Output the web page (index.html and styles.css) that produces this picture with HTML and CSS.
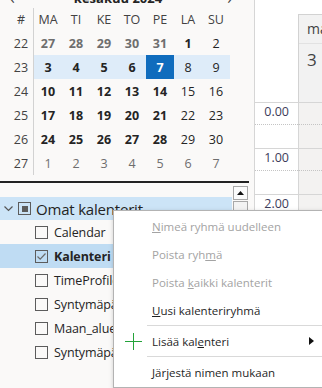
FILE: index.html
```html
<!DOCTYPE html>
<html lang="fi">

<head>
    <meta charset="UTF-8">
    <meta name="viewport" content="width=device-width, initial-scale=1.0">
    <title>Kalenteri</title>
    <link rel="stylesheet" href="styles.css">
</head>

<body>

    <!-- Left pane: month + folder list -->
    <div class="sidebar">
        <div class="month-title">
            <span class="month-nav">&lsaquo;</span>
            <span class="month-name">kesäkuu 2024</span>
            <span class="month-nav">&rsaquo;</span>
        </div>

        <div class="cal">
            <div class="wk">#</div>
            <div class="dow">MA</div><div class="dow">TI</div><div class="dow">KE</div><div class="dow">TO</div><div class="dow">PE</div><div class="dow">LA</div><div class="dow">SU</div>

            <div class="wk">22</div>
            <div class="day other bold">27</div><div class="day other bold">28</div><div class="day other bold">29</div><div class="day other bold">30</div><div class="day other bold">31</div><div class="day bold">1</div><div class="day">2</div>

            <div class="wk">23</div>
            <div class="day bold week-on">3</div><div class="day bold week-on">4</div><div class="day bold week-on">5</div><div class="day bold week-on">6</div><div class="day bold selected">7</div><div class="day week-on">8</div><div class="day week-on">9</div>

            <div class="wk">24</div>
            <div class="day bold">10</div><div class="day bold">11</div><div class="day bold">12</div><div class="day bold">13</div><div class="day bold">14</div><div class="day">15</div><div class="day">16</div>

            <div class="wk">25</div>
            <div class="day bold">17</div><div class="day bold">18</div><div class="day bold">19</div><div class="day bold">20</div><div class="day bold">21</div><div class="day">22</div><div class="day">23</div>

            <div class="wk">26</div>
            <div class="day bold">24</div><div class="day bold">25</div><div class="day bold">26</div><div class="day bold">27</div><div class="day bold">28</div><div class="day">29</div><div class="day">30</div>

            <div class="wk">27</div>
            <div class="day other">1</div><div class="day other">2</div><div class="day other">3</div><div class="day other">4</div><div class="day other">5</div><div class="day other">6</div><div class="day other">7</div>
        </div>

        <div class="pane-split"></div>

        <div class="folders">
            <div class="folder-list">
                <div class="group-row">
                    <svg class="chevron" width="9" height="6" viewBox="0 0 9 6">
                        <path d="M0.5 0.5 L4.5 4.5 L8.5 0.5" fill="none" stroke="#555" stroke-width="1.2" />
                    </svg>
                    <span class="box box-mixed"></span>
                    <span class="group-name">Omat kalenterit</span>
                </div>
                <div class="cal-row"><span class="box"></span>Calendar</div>
                <div class="cal-row checked">
                    <span class="box">
                        <svg width="11" height="11" viewBox="0 0 11 11">
                            <path d="M1.5 5.5 L4.2 8.2 L9.5 2.5" fill="none" stroke="#6a6a6a" stroke-width="1.2" />
                        </svg>
                    </span>Kalenteri
                </div>
                <div class="cal-row"><span class="box"></span>TimeProfile</div>
                <div class="cal-row"><span class="box"></span>Syntymäpäivät</div>
                <div class="cal-row"><span class="box"></span>Maan_alueen_pyhäpäivät</div>
                <div class="cal-row"><span class="box"></span>Syntymäpäivät</div>
            </div>
            <div class="scrollbar">
                <div class="scroll-up">
                    <svg width="7" height="4" viewBox="0 0 7 4"><path d="M0 4 L3.5 0 L7 4 Z" fill="#111" /></svg>
                </div>
                <div class="scroll-thumb"></div>
            </div>
        </div>
    </div>

    <!-- Right pane: day view -->
    <div class="day-view">
        <div class="day-top">
            <div class="gutter"></div>
            <div class="day-top-slot">
                <div class="day-head">
                    <div class="day-abbr">ma</div>
                    <div class="day-date">3</div>
                </div>
            </div>
        </div>
        <div class="hour">
            <div class="time">0.00</div><div class="slot half"></div>
            <div class="gutter"></div><div class="slot"></div>
        </div>
        <div class="hour">
            <div class="time">1.00</div><div class="slot half"></div>
            <div class="gutter"></div><div class="slot"></div>
        </div>
        <div class="hour">
            <div class="time">2.00</div><div class="slot half"></div>
            <div class="gutter"></div><div class="slot"></div>
        </div>
        <div class="hour">
            <div class="time">3.00</div><div class="slot half"></div>
            <div class="gutter"></div><div class="slot"></div>
        </div>
    </div>

    <!-- Context menu -->
    <div class="menu">
        <div class="menu-item disabled"><span class="menu-icon"></span><span><u>N</u>imeä ryhmä uudelleen</span></div>
        <div class="menu-item disabled"><span class="menu-icon"></span><span>Poista ryh<u>m</u>ä</span></div>
        <div class="menu-item disabled"><span class="menu-icon"></span><span>Poista <u>k</u>aikki kalenterit</span></div>
        <div class="menu-item"><span class="menu-icon"></span><span><u>U</u>usi kalenteriryhmä</span></div>
        <div class="menu-sep"></div>
        <div class="menu-item">
            <span class="menu-icon">
                <svg width="19" height="19" viewBox="0 0 19 19">
                    <path d="M9.5 1 V18 M1 9.5 H18" stroke="#24a33a" stroke-width="1" />
                </svg>
            </span>
            <span>Lisää kal<u>e</u>nteri</span>
            <span class="submenu-arrow"></span>
        </div>
        <div class="menu-sep"></div>
        <div class="menu-item"><span class="menu-icon"></span><span><u>J</u>ärjestä nimen mukaan</span></div>
    </div>

</body>

</html>
```

FILE: styles.css
```css
body,
html {
    margin: 0;
    padding: 0;
    height: 388px;
    overflow: hidden;
}

body {
    display: flex;
    position: relative;
    background-color: #ffffff;
    font-family: "Open Sans", "Noto Sans", sans-serif;
    color: #242424;
}

/* Left pane */
.sidebar {
    width: 255px;
    height: 388px;
    flex: none;
    box-sizing: border-box;
    border-right: 1px solid #d6d6d6;
    background-color: #faf9f8;
    overflow: hidden;
}

.month-title {
    display: flex;
    align-items: center;
    height: 18px;
    margin-top: -11px;
    padding: 0 22px 0 10px;
    font-size: 13px;
    line-height: 18px;
}

.month-name {
    flex: 1;
    text-align: center;
    font-weight: 700;
    padding-right: 6px;
}

.month-nav {
    font-size: 16px;
    color: #444;
}

.cal {
    display: grid;
    grid-template-columns: 25px repeat(7, 28px);
    grid-template-rows: 23px repeat(6, 24px);
    margin-top: 1px;
    padding-left: 9px;
    font-size: 12.5px;
}

.cal > div {
    display: flex;
    align-items: center;
    justify-content: center;
}

.wk {
    border-right: 1px solid #d2d2d2;
    color: #424242;
}

.dow {
    color: #424242;
}

.day {
    color: #242424;
}

.day.bold {
    font-weight: 700;
}

.day.other {
    color: #6e6e6e;
}

.day.week-on {
    background-color: #deecf9;
}

.day.selected {
    background-color: #0f6cbd;
    color: #ffffff;
}

.pane-split {
    height: 2px;
    margin: 6px 5px 0 0;
    background-color: #222;
}

.folders {
    display: flex;
    padding-right: 6px;
}

.folder-list {
    flex: 1;
    padding-top: 14px;
    margin-right: 1px;
}

.group-row {
    display: flex;
    align-items: center;
    height: 23px;
    background-color: #cce4f7;
    white-space: nowrap;
}

.chevron {
    margin: 0 5px 0 4px;
}

.box {
    display: inline-flex;
    align-items: center;
    justify-content: center;
    width: 13px;
    height: 13px;
    box-sizing: border-box;
    border: 1px solid #5c5c5c;
    flex: none;
}

.box-mixed::after {
    content: "";
    width: 6px;
    height: 6px;
    background-color: #5c5c5c;
}

.group-name {
    margin-left: 5px;
    font-size: 15px;
    letter-spacing: -0.2px;
    color: #242424;
}

.cal-row {
    display: flex;
    align-items: center;
    height: 24px;
    padding-left: 35px;
    font-size: 12.5px;
    letter-spacing: -0.1px;
    white-space: nowrap;
}

.cal-row .box {
    margin-right: 6px;
}

.cal-row.checked {
    background-color: #bfdcf3;
    font-weight: 700;
}

.scrollbar {
    width: 15px;
    padding-top: 3px;
}

.scroll-up {
    display: flex;
    align-items: center;
    justify-content: center;
    height: 14px;
    box-sizing: border-box;
    border: 1px solid #a8a8a8;
    background-color: #fbfbfb;
}

.scroll-thumb {
    height: 120px;
    margin-top: 1px;
    border: 1px solid #a8a8a8;
    background-color: #f3f3f3;
}

/* Day view */
.day-view {
    flex: 1;
    height: 388px;
    overflow: hidden;
}

.day-top {
    display: grid;
    grid-template-columns: 43px 1fr;
    height: 102px;
}

.gutter {
    background-color: #ffffff;
}

.day-top-slot {
    padding-top: 14px;
    display: flex;
}

.day-head {
    flex: 1;
    border-top: 1px solid #d2d2d2;
    border-left: 1px solid #d2d2d2;
    background-color: #f2f2f2;
    color: #424242;
}

.day-abbr {
    height: 28px;
    line-height: 28px;
    padding-left: 8px;
    font-size: 14px;
    border-bottom: 1px solid #e2e2e2;
}

.day-date {
    padding: 4px 0 0 8px;
    font-size: 17px;
}

.hour {
    display: grid;
    grid-template-columns: 43px 1fr;
    grid-template-rows: 22px 23px;
    border-top: 1px solid #d6d6d6;
}

.time {
    text-align: right;
    padding: 0 9px 0 0;
    font-size: 12.5px;
    line-height: 17px;
    color: #3c3c5a;
    border-bottom: 1px dotted #c4c4c4;
}

.slot {
    background-color: #f3f2f1;
    border-left: 1px solid #d6d6d6;
}

.slot.half {
    border-bottom: 1px dotted #c4c4c4;
}

/* Context menu */
.menu {
    position: absolute;
    left: 113px;
    top: 210px;
    width: 212px;
    height: 175px;
    padding-top: 1px;
    background-color: #ffffff;
    border: 1px solid #b3b3b3;
    box-shadow: 1px 2px 5px rgba(0, 0, 0, 0.25);
    font-size: 11.5px;
    color: #1f1f1f;
}

.menu-item {
    display: flex;
    align-items: center;
    height: 28px;
    white-space: nowrap;
}

.menu-item.disabled {
    color: #a3a3a3;
}

.menu-icon {
    display: flex;
    align-items: center;
    justify-content: center;
    width: 38px;
    flex: none;
}

.submenu-arrow {
    margin-left: auto;
    margin-right: 12px;
    width: 0;
    height: 0;
    border-top: 4px solid transparent;
    border-bottom: 4px solid transparent;
    border-left: 5px solid #111;
}

.menu-sep {
    margin: 1px 0 1px 33px;
    height: 1px;
    background-color: #d9d9d9;
}
```
